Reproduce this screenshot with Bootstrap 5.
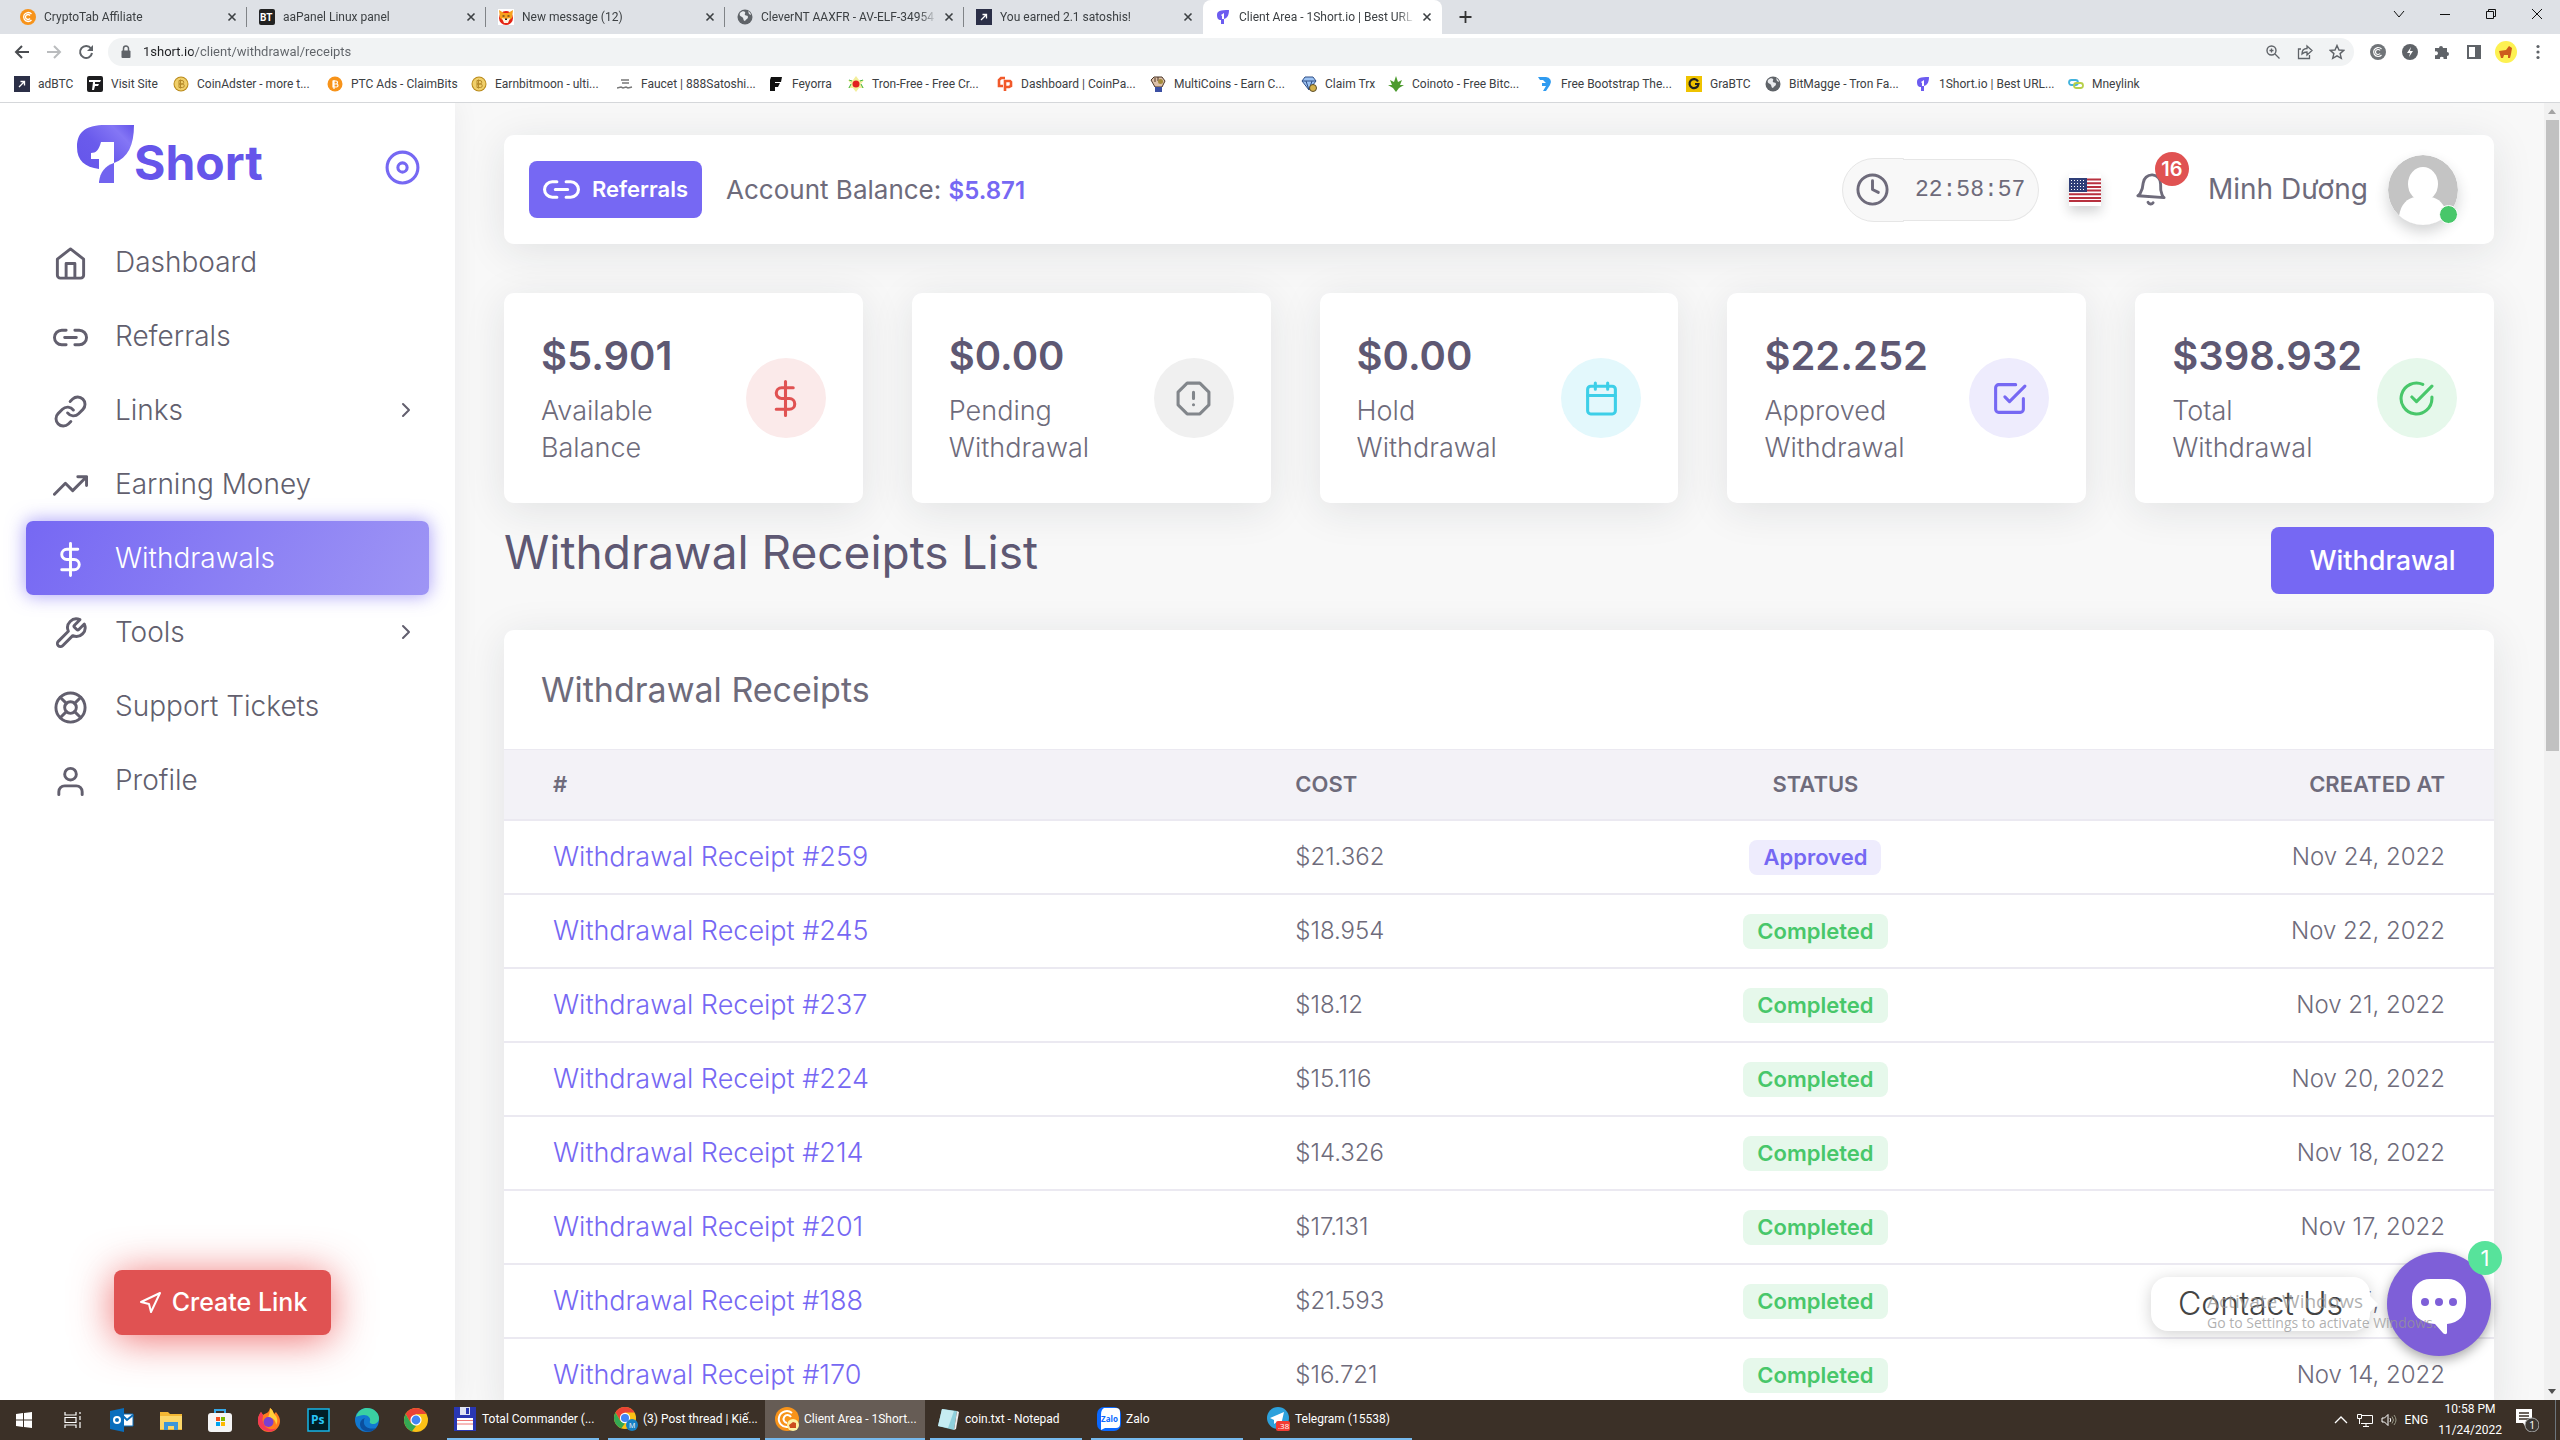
<!DOCTYPE html>
<html lang="en">
<head>
<meta charset="utf-8">
<meta name="viewport" content="width=device-width, initial-scale=1">
<title>Client Area - 1Short.io | Best URL Shortener</title>
<link href="https://cdn.jsdelivr.net/npm/bootstrap@5.3.0/dist/css/bootstrap.min.css" rel="stylesheet">
<style>
:root{--violet:#7668f3;--ink:#6e6b7b;--ink-dark:#5e5873;--red:#e05252;--line:#ebe9f1;--green:#48c76a}
html,body{height:100%}
body{font-family:Inter,"Noto Sans",sans-serif;color:var(--ink);font-size:24px;line-height:37px;overflow:hidden;background:#f8f8f8}
a{text-decoration:none;color:inherit}
button{color:inherit}
svg{display:block;flex:none}
.stroke{fill:none;stroke:currentColor;stroke-width:2;stroke-linecap:round;stroke-linejoin:round}
.i16{width:16px;height:16px}.i24{width:24px;height:24px}.i35{width:35px;height:35px}.i37{width:37px;height:37px}
/* browser window */
.browser{font-family:Roboto,"Noto Sans",sans-serif;font-size:12px;line-height:16px;color:#3c4043;background:#fff;border-bottom:1px solid #d5d7da}
.tabstrip{height:34px;background:#dee1e6;padding-left:8px}
.btab{width:239px;padding:0 7px 0 12px;position:relative}
.btab:not(.cur):not(.last)::after{content:"";position:absolute;right:0;top:7px;height:20px;width:1px;background:#808387}
.btab.cur{background:#fff;border-radius:8px 8px 0 0}
.btab .ttl{flex:1;overflow:hidden;white-space:nowrap;margin-right:-4px;-webkit-mask-image:linear-gradient(90deg,#000 90%,transparent);mask-image:linear-gradient(90deg,#000 90%,transparent)}
.plain{border:0;background:none;padding:0;display:flex;align-items:center;justify-content:center}
.winctl{gap:30px;padding-right:15px;height:28px;color:#111}
.toolbar{height:36px;padding:0 14px;gap:16px;color:#5f6368}
.omni{height:28px;border-radius:14px;background:#f1f3f4;padding:0 9px 0 10px;gap:16px;margin-left:-2px}
.omni input{border:0;background:linear-gradient(90deg,#202124 50px,#5f6368 50px);-webkit-background-clip:text;background-clip:text;-webkit-text-fill-color:transparent;outline:0;flex:1;padding:0;font-size:13px;margin-left:-7px}
.user-pic{margin:0 -4px}
.marks{height:32px;padding:0 14px 4px;display:grid;align-items:center;grid-template-columns:73px 86px 154px 144px 146px 151px 80px 149px 153px 151px 87px 149px 149px 79px 150px 153px 90px}
.marks a{display:flex;gap:8px;white-space:nowrap}
/* sidebar */
.sidebar{width:455px;background:#fff;box-shadow:0 0 26px rgba(34,41,47,.06);z-index:1;padding:0 26px}
.brand{height:122px;padding:22px 8px 0 51px}
.brand .word{font-size:48px;line-height:48px;font-weight:700;color:#6655ea;margin-top:14px}
.pin{margin-top:24px;color:var(--violet)}
.menu a{height:74px;padding:0 11px 0 27px;gap:27px;font-size:28px;font-weight:300;color:#625f6e;border-radius:7px}
.menu svg:first-child{margin-top:3px}
.menu .act{color:#fff;background:linear-gradient(118deg,var(--violet),#9e95f5);box-shadow:0 0 18px 1px rgba(118,104,243,.6)}
.create{height:65px;width:217px;font-size:25px;font-weight:500;color:#fff;background:var(--red);border:0;border-radius:8px;box-shadow:0 4px 40px rgba(234,60,60,.75);gap:10px;margin:auto 0 65px 88px}
/* content */
.content{padding:32px 50px 0 49px;min-width:0}
.panel{background:#fff;border-radius:10px;box-shadow:0 7px 42px rgba(34,41,47,.1)}
.topbar{height:109px;padding:0 36px 0 25px;margin-bottom:49px}
.vbtn{background:var(--violet);color:#fff;border:0;border-radius:8px}
.refbtn{height:57px;padding:0 14px;font-size:22px;font-weight:600;gap:12px}
.bal{font-size:26px}
.bal strong{font-weight:600;font-size:24px;color:var(--violet)}
.clock{width:197px;height:64px}
.clock>*{background:#f8f8f8!important;border:1px solid #e6e6e6!important;color:var(--ink)!important}
.clock .input-group-text{width:62px;padding:0 12px;border-radius:32px 0 0 32px}
.clock input{height:62px;font:23px "Liberation Mono",monospace;padding:0 12px;border-left:0!important;border-radius:0 32px 32px 0!important;margin:1px 0 1px -1px}
.flagbox{margin-left:30px;width:32px;height:32px;box-shadow:0 6px 12px rgba(34,41,47,.2)}
.bell{margin-left:34px}
.bell b{position:absolute;left:20px;top:-20px;width:34px;height:34px;line-height:34px;border-radius:50%;background:var(--red);color:#fff;font-size:20px;text-align:center;font-weight:600}
.uname{margin:0 20px 0 38px;font-weight:400;font-size:28px}
.ava{width:70px;height:70px;border-radius:50%;box-shadow:0 7px 14px rgba(34,41,47,.2)}
.dot{position:absolute;right:0;bottom:1px;width:19px;height:19px;border-radius:50%;background:var(--green);border:1px solid #fff}
.stats{display:grid;grid-template-columns:repeat(5,1fr);gap:49px}
.stat{height:210px;padding:37px;font-size:27px;font-weight:300}
.stat h2{font-size:40px;line-height:49px;font-weight:600;color:var(--ink-dark);margin:0 0 12px;white-space:nowrap}
.ring{width:80px;height:80px;border-radius:50%;margin-left:-20px}
.ring.rd{background:#fbeaea;color:#e05252}.ring.gy{background:#f0f0f0;color:#82868b}.ring.cy{background:#e3f8fc;color:#3dcfe8}.ring.vt{background:#eeecfd;color:#7668f3}.ring.gn{background:#e6f8eb;color:#48c76a}
.title{height:127px;padding-top:24px}
.title h1{font-size:46px;line-height:50px;font-weight:400;color:var(--ink-dark);margin:0}
.title button{height:67px;width:223px;font-weight:500;font-size:27px}
.panel h3{font-size:34px;line-height:37px;font-weight:400;margin:0;padding:41px 37px}
.rtable{table-layout:fixed;width:100%;border-collapse:collapse}
.rtable th{font-size:22px;line-height:32px;padding:18px 49px;background:#f3f2f7;border-top:1px solid var(--line);border-bottom:2px solid var(--line);font-weight:600;height:70px}
.rtable td{height:74px;padding:0 49px;border-bottom:2px solid var(--line);vertical-align:middle;white-space:nowrap;font-weight:300}
.rtable td a{color:var(--violet);font-size:27px}
.pill{display:inline-block;font-size:22px;line-height:35px;font-weight:600;padding:0 14px;border-radius:8px;color:var(--green);background:#e6f8eb}
.pill.vi{color:var(--violet);background:#eeecfd}
.sbar{width:16px;background:#f1f1f1}
.sbar i{width:13px;height:631px;background:#c1c1c1}
/* overlays */
.contact{position:absolute;right:190px;bottom:69px;width:219px;height:54px;line-height:54px;border-radius:17px;background:#fff;color:#444;font-size:32px;box-shadow:0 3px 16px rgba(0,0,0,.18);text-align:center;font-weight:300;z-index:3}
.contact::after{content:"";position:absolute;right:-8px;top:19px;border:8px solid transparent;border-left-color:#fff;border-right:0}
.chat{position:absolute;right:69px;bottom:44px;width:104px;height:104px;border-radius:50%;border:0;background:#7e5fd8;z-index:3;box-shadow:0 4px 12px rgba(0,0,0,.35);padding-top:6px}
.chat b{position:absolute;right:-11px;top:-11px;width:34px;height:34px;line-height:34px;border-radius:50%;background:#57e39b;color:#fff;font-weight:400;font-size:22px}
.mark-os{position:absolute;right:117px;bottom:67px;z-index:4;color:rgba(150,150,150,.75);font-family:"Open Sans",sans-serif;font-size:19px;line-height:24px;width:236px;white-space:nowrap}
.mark-os span{display:block;font-size:14px;line-height:20px}
/* desktop task bar */
.taskbar{height:40px;background:#3b3027;color:#fff;font-family:Roboto,"Noto Sans",sans-serif;font-size:12px;line-height:16px}
.quick{gap:25px;padding:0 19px 0 12px}
.task{width:152px;height:40px;border:0;border-bottom:2px solid #76b9ed;background:none;color:#fff;padding:0 4px 0 6px;gap:5px;margin-right:9px;white-space:nowrap;text-align:left}
.task.on{background:#665c55;width:160px;padding-left:10px;margin:0 5px 0 -4px}
.when{line-height:21px;margin:0 9px 0 2px}
.desk{width:5px}
</style>
</head>
<body class="d-flex flex-column">
<svg width="0" height="0" class="position-absolute">
<defs>
<symbol id="x" viewBox="0 0 16 16"><path d="M4.500 4.500l7 7M11.500 4.500l-7 7" stroke="#3c4043" stroke-width="1.600"/></symbol>
<symbol id="adbtc" viewBox="0 0 16 16"><path fill="#2b2f47" d="M0 0h16v16H0z"/><path d="M5 11l5-5M6.500 5.500H10.500V9.500" fill="none" stroke="#fff" stroke-width="1.300"/></symbol>
<symbol id="globe" viewBox="0 0 16 16"><circle cx="8" cy="8" r="7.500" fill="#5f6368"/><path d="M3 4c2-2 4-2 5-1s-1 2 0 3 3 0 3 2-2 2-3 4c-2 0-1-3-3-4S2 6 3 4zM11 2c2 1 3 3 3 4l-2-1z" fill="#e8eaed"/></symbol>
<symbol id="one" viewBox="0 0 16 16"><path d="M2 6C2 2 5 1 14 1c0 4-1 8-5 9v5H6v-4C3 11 2 9 2 6z" fill="#6c5cf0"/><path d="M6 6l3-2v6H7V7z" fill="#fff"/></symbol>
<symbol id="coin" viewBox="0 0 16 16"><circle cx="8" cy="8" r="7.500" fill="#b98a1c"/><circle cx="8" cy="8" r="6.500" fill="#f0cf6a"/><path d="M6 4.500h3a1.700 1.700 0 010 3.500H6h3.500a1.700 1.700 0 010 3.500H6zM7.500 3.500v9" fill="none" stroke="#b58a2a" stroke-width="1"/></symbol>
<symbol id="chrome" viewBox="0 0 24 24"><circle cx="12" cy="12" r="12" fill="#fbc116"/><path d="M12 0a12 12 0 0110.400 6H12L6.800 15 1.600 6A12 12 0 0112 0z" fill="#ea4335"/><path d="M1.600 6l5.200 9 5.200 3-4 5.300A12 12 0 011.600 6z" fill="#34a853"/><circle cx="12" cy="12" r="5.600" fill="#fff"/><circle cx="12" cy="12" r="4.400" fill="#4285f4"/></symbol>
<symbol id="link2" viewBox="0 0 24 24"><path class="stroke" d="M15 7h3a5 5 0 015 5 5 5 0 01-5 5h-3m-6 0H6a5 5 0 01-5-5 5 5 0 015-5h3M8 12h8"/></symbol>
<symbol id="dollar" viewBox="0 0 24 24"><path class="stroke" d="M12 1v22M17 5H9.500a3.500 3.500 0 000 7h5a3.500 3.500 0 010 7H6"/></symbol>
<symbol id="chev" viewBox="0 0 24 24"><path class="stroke" d="M9 18l6-6-6-6"/></symbol>
<linearGradient id="lg" x1="0" y1="1" x2="1" y2="0"><stop offset="0" stop-color="#6353ea"/><stop offset=".5" stop-color="#6a5bec"/><stop offset=".8" stop-color="#8476f5"/><stop offset="1" stop-color="#6353ea"/></linearGradient>
</defs>
</svg>

<header class="browser">
 <div class="tabstrip d-flex">
  <div class="btab d-flex align-items-center gap-2"><svg class="i16" viewBox="0 0 16 16"><circle cx="8" cy="8" r="8" fill="#f7931a"/><path d="M11.500 5A4.500 4.500 0 108 12.500a4.500 4.500 0 003.500-1.500M10 6.500a2.500 2.500 0 100 3" fill="none" stroke="#fff" stroke-width="1.300"/></svg><span class="ttl">CryptoTab Affiliate</span><button class="plain" aria-label="Close tab"><svg class="i16"><use href="#x"/></svg></button></div>
  <div class="btab d-flex align-items-center gap-2"><svg class="i16" viewBox="0 0 16 16"><rect width="16" height="16" rx="2" fill="#222"/><text x="1" y="12" font-size="10" font-weight="700" font-family="Roboto" fill="#fff">BT</text></svg><span class="ttl">aaPanel Linux panel</span><button class="plain" aria-label="Close tab"><svg class="i16"><use href="#x"/></svg></button></div>
  <div class="btab d-flex align-items-center gap-2"><svg class="i16" viewBox="0 0 16 16"><path d="M0 0h16v16H0z" fill="#fff"/><circle cx="8" cy="9" r="7" fill="#e42313"/><path d="M1 1l5 3h4l5-3-1 8-6 5-6-5z" fill="#f7a01d"/><path d="M4 9l4 1 4-1-2 5H6z" fill="#fff3df"/><path d="M4.500 7h2M9.500 7h2M7 10h2l-1 1z" stroke="#222" stroke-width="1"/></svg><span class="ttl">New message (12)</span><button class="plain" aria-label="Close tab"><svg class="i16"><use href="#x"/></svg></button></div>
  <div class="btab d-flex align-items-center gap-2"><svg class="i16"><use href="#globe"/></svg><span class="ttl">CleverNT AAXFR - AV-ELF-34954</span><button class="plain" aria-label="Close tab"><svg class="i16"><use href="#x"/></svg></button></div>
  <div class="btab last d-flex align-items-center gap-2"><svg class="i16"><use href="#adbtc"/></svg><span class="ttl">You earned 2.1 satoshis!</span><button class="plain" aria-label="Close tab"><svg class="i16"><use href="#x"/></svg></button></div>
  <div class="btab cur d-flex align-items-center gap-2"><svg class="i16"><use href="#one"/></svg><span class="ttl">Client Area - 1Short.io | Best URL</span><button class="plain" aria-label="Close tab"><svg class="i16"><use href="#x"/></svg></button></div>
  <button class="plain ms-3" aria-label="New tab"><svg class="i16" viewBox="0 0 16 16"><path d="M7.500 2v12M1.500 8h12" stroke="#333" stroke-width="1.800"/></svg></button>
  <div class="winctl d-flex align-items-center ms-auto">
   <button class="plain" aria-label="Search tabs"><svg class="i16" viewBox="0 0 16 16"><path d="M3 5l5 6 5-6" fill="none" stroke="currentColor"/></svg></button>
   <button class="plain" aria-label="Minimize"><svg class="i16" viewBox="0 0 16 16"><path d="M3 8.500h10" stroke="currentColor"/></svg></button>
   <button class="plain" aria-label="Restore"><svg class="i16" viewBox="0 0 16 16"><path d="M3.500 5.500h7v7h-7zM5.500 5.500v-2h7v7h-2" fill="none" stroke="currentColor"/></svg></button>
   <button class="plain" aria-label="Close"><svg class="i16" viewBox="0 0 16 16"><path d="M3 3l10 10M13 3L3 13" stroke="currentColor"/></svg></button>
  </div>
 </div>
 <div class="toolbar d-flex align-items-center">
  <button class="plain" aria-label="Back"><svg class="i16" viewBox="0 0 16 16"><path d="M15 8H2M8 2L2 8l6 6" fill="none" stroke="#4a4d51" stroke-width="2"/></svg></button>
  <button class="plain" aria-label="Forward"><svg class="i16" viewBox="0 0 16 16"><path d="M1 8h13M8 2l6 6-6 6" fill="none" stroke="#babcbe" stroke-width="2"/></svg></button>
  <button class="plain" aria-label="Reload"><svg class="i16" viewBox="0 0 16 16"><path d="M13 4.500A6 6 0 1014 9" fill="none" stroke="#5f6368" stroke-width="2"/><path d="M15 1v6H9z" fill="#5f6368"/></svg></button>
  <div class="omni d-flex align-items-center flex-fill">
   <svg class="i16" viewBox="0 0 16 16"><rect x="3.500" y="6.500" width="9" height="7.500" rx="1" fill="#5f6368"/><path d="M5.500 7V4.500a2.500 2.500 0 015 0V7" fill="none" stroke="#5f6368" stroke-width="1.500"/></svg>
   <input type="text" value="1short.io/client/withdrawal/receipts" aria-label="Address">
   <svg class="i16" viewBox="0 0 16 16"><circle cx="6.500" cy="6.500" r="4.500" fill="none" stroke="currentColor" stroke-width="1.400"/><path d="M10 10l4.500 4.500M4.500 6.500h4M6.500 4.500v4" stroke="currentColor" stroke-width="1.300"/></svg>
   <svg class="i16" viewBox="0 0 16 16"><path d="M4 5H1.500v9.500h11V11M5 10c0-4 2-5.500 5-5.500V2l5 4.500L10 11V8C8 8 6.500 8.500 5 10z" fill="none" stroke="currentColor" stroke-width="1.300"/></svg>
   <svg class="i16" viewBox="0 0 16 16"><path d="M8 1.500l2 4.500 4.800.4-3.700 3.200 1.200 4.700L8 11.800l-4.300 2.500 1.200-4.700L1.200 6.400 6 6z" fill="none" stroke="currentColor" stroke-width="1.400"/></svg>
  </div>
  <svg class="i16" viewBox="0 0 16 16"><circle cx="8" cy="8" r="8" fill="#707478"/><path d="M11.500 5A4.500 4.500 0 108 12.500a4.500 4.500 0 003.500-1.500M10 6.500a2.500 2.500 0 100 3" fill="none" stroke="#fff" stroke-width="1.200"/></svg>
  <svg class="i16" viewBox="0 0 16 16"><circle cx="8" cy="8" r="8" fill="#5f6368"/><path d="M9 3L5 9h3l-1 4 4-6H8z" fill="#fff"/></svg>
  <svg class="i16" viewBox="0 0 16 16"><path d="M1 4h4a2 2 0 114 0h4v4a2 2 0 110 4v3H9.500a1.800 1.800 0 10-3.500 0H1v-4a2 2 0 100-3.500z" fill="#5f6368"/></svg>
  <svg class="i16" viewBox="0 0 16 16"><path d="M2 2h12v12H2z" fill="none" stroke="#5f6368" stroke-width="2"/><path d="M9 1h6v14H9z" fill="#5f6368"/></svg>
  <svg class="i24 user-pic" viewBox="0 0 24 24"><circle cx="12" cy="12" r="11" fill="#fdf151"/><path d="M5 11l7-1 3-4 3 2-1 6-1 4h-2v-3h-4l-1 3H7z" fill="#cc5c1d"/></svg>
  <svg class="i16" viewBox="0 0 16 16"><circle cx="8" cy="2.500" r="1.600" fill="#5f6368"/><circle cx="8" cy="8" r="1.600" fill="#5f6368"/><circle cx="8" cy="13.500" r="1.600" fill="#5f6368"/></svg>
 </div>
 <nav class="marks" aria-label="Bookmarks">
  <a href="#"><svg class="i16"><use href="#adbtc"/></svg>adBTC</a>
  <a href="#"><svg class="i16" viewBox="0 0 16 16"><rect width="16" height="16" rx="2" fill="#1d1d1f"/><path d="M2 4h12l-1 2H8v2h4l-1 2H8l-1 4H5l1-8H2z" fill="#fff"/></svg>Visit Site</a>
  <a href="#"><svg class="i16"><use href="#coin"/></svg>CoinAdster - more t...</a>
  <a href="#"><svg class="i16" viewBox="0 0 16 16"><circle cx="8" cy="8" r="7.500" fill="#f7931a"/><path d="M6 5h3a1.500 1.500 0 010 3H6h3.500a1.500 1.500 0 010 3H6zM7 4v9" fill="none" stroke="#fff" stroke-width="1.200"/></svg>PTC Ads - ClaimBits</a>
  <a href="#"><svg class="i16"><use href="#coin"/></svg>Earnbitmoon - ulti...</a>
  <a href="#"><svg class="i16" viewBox="0 0 16 16"><path d="M4 4h8M5 7h7M0 12l4-1 2 1 3-1 2 1 4-1" fill="none" stroke="#777" stroke-width="1.500"/></svg>Faucet | 888Satoshi...</a>
  <a href="#"><svg class="i16" viewBox="0 0 16 16"><path d="M3 1h11l-1 5H7v1h5l-2 4H7v4H2V4z" fill="#111"/></svg>Feyorra</a>
  <a href="#"><svg class="i16" viewBox="0 0 16 16"><path d="M8 0l3 4 5 0-3 4 3 4h-5l-3 4-3-4H0l3-4-3-4h5z" fill="#f3ee9b"/><circle cx="8" cy="8" r="3.500" fill="#e21f1f"/><path d="M1 12l2-4M15 12l-2-4M1 4l3 1M15 4l-3 1" stroke="#3bb54a"/></svg>Tron-Free - Free Cr...</a>
  <a href="#"><svg class="i16" viewBox="0 0 16 16"><path d="M8 2H4L2 4v6h4M8 15V5h5l1 1v4l-2 1H8" fill="none" stroke="#f1592a" stroke-width="2.600"/></svg>Dashboard | CoinPa...</a>
  <a href="#"><svg class="i16" viewBox="0 0 16 16"><path d="M1 4l3-3 8 0 3 4-3 6H5z" fill="#dcc0a8" stroke="#4a3527"/><path d="M5 2v4M8 1v4" stroke="#4a3527"/><circle cx="10.500" cy="5.500" r="2.500" fill="#a48b3c"/><path d="M5 11h7v5H5z" fill="#3b4fa3"/></svg>MultiCoins - Earn C...</a>
  <a href="#"><svg class="i16" viewBox="0 0 16 16"><path d="M4 1h8l3 4-7 9-7-9z" fill="#9cc2f2" stroke="#2f4f86"/><path d="M1 5h14M5 5l3 9 3-9" stroke="#2f4f86" fill="none"/><circle cx="12" cy="12" r="3.500" fill="#d4b24c" stroke="#5b4d2a"/></svg>Claim Trx</a>
  <a href="#"><svg class="i16" viewBox="0 0 16 16"><path d="M8 0l2 6 4-2-2 5 4 0-5 3-3 4-3-4-5-3h4L2 4l4 2z" fill="#4d9b2f"/></svg>Coinoto - Free Bitc...</a>
  <a href="#"><svg class="i16" viewBox="0 0 16 16"><path d="M1 1h8a5 5 0 014 8l-4 6H6l3-5-4 0 0-3h4L6 4H3z" fill="#2f9bf0"/></svg>Free Bootstrap The...</a>
  <a href="#"><svg class="i16" viewBox="0 0 16 16"><path d="M0 0h16v16H0z" fill="#efc300"/><path d="M12 5.500A4.500 4.500 0 1012.500 8H9" fill="none" stroke="#222" stroke-width="2.200"/></svg>GraBTC</a>
  <a href="#"><svg class="i16"><use href="#globe"/></svg>BitMagge - Tron Fa...</a>
  <a href="#"><svg class="i16"><use href="#one"/></svg>1Short.io | Best URL...</a>
  <a href="#"><svg class="i16" viewBox="0 0 16 16"><rect x="1" y="4" width="9" height="5" rx="2.500" fill="none" stroke="#43b3dd" stroke-width="1.800"/><rect x="6" y="7" width="9" height="5" rx="2.500" fill="none" stroke="#b7d04a" stroke-width="1.800"/></svg>Mneylink</a>
 </nav>
</header>

<div class="d-flex flex-fill position-relative overflow-hidden">
 <aside class="sidebar d-flex flex-column flex-shrink-0">
  <div class="brand d-flex align-items-start">
   <svg width="57" height="58" viewBox="0 0 57 58"><path d="M0 22C0 6 10 0 28 0h29c0 20-6 33-20 38v20H22V44C8 42 0 36 0 22z" fill="url(#lg)"/><path d="M14 28c5 0 8-3 10-11h13v21l-8 8-7 11V34h-8z" fill="#fff"/><path d="M22 57c1-10 6-16 15-19v20H22z" fill="#7163ef"/></svg>
   <span class="word">Short</span>
   <svg class="i37 stroke ms-auto pin" viewBox="0 0 24 24"><circle cx="12" cy="12" r="10"/><circle cx="12" cy="12" r="3"/></svg>
  </div>
  <nav class="menu d-flex flex-column">
   <a class="d-flex align-items-center" href="#"><svg class="i35 stroke" viewBox="0 0 24 24"><path d="M3 9l9-7 9 7v11a2 2 0 01-2 2H5a2 2 0 01-2-2zM9 22V12h6v10"/></svg>Dashboard</a>
   <a class="d-flex align-items-center" href="#"><svg class="i35"><use href="#link2"/></svg>Referrals</a>
   <a class="d-flex align-items-center" href="#"><svg class="i35 stroke" viewBox="0 0 24 24"><path d="M10 13a5 5 0 007.540.540l3-3a5 5 0 00-7.070-7.070l-1.720 1.710M14 11a5 5 0 00-7.540-.540l-3 3a5 5 0 007.070 7.070l1.710-1.710"/></svg>Links<svg class="i24 ms-auto"><use href="#chev"/></svg></a>
   <a class="d-flex align-items-center" href="#"><svg class="i35 stroke" viewBox="0 0 24 24"><path d="M23 6l-9.500 9.500-5-5L1 18M17 6h6v6"/></svg>Earning Money</a>
   <a class="d-flex align-items-center act" href="#"><svg class="i35"><use href="#dollar"/></svg>Withdrawals</a>
   <a class="d-flex align-items-center" href="#"><svg class="i35 stroke" viewBox="0 0 24 24"><path d="M14.700 6.300a1 1 0 000 1.400l1.600 1.600a1 1 0 001.400 0l3.770-3.770a6 6 0 01-7.940 7.940l-6.910 6.910a2.120 2.120 0 01-3-3l6.910-6.910a6 6 0 017.940-7.940l-3.760 3.760z"/></svg>Tools<svg class="i24 ms-auto"><use href="#chev"/></svg></a>
   <a class="d-flex align-items-center" href="#"><svg class="i35 stroke" viewBox="0 0 24 24"><circle cx="12" cy="12" r="10"/><circle cx="12" cy="12" r="4"/><path d="M4.930 4.930l4.240 4.240M14.830 14.830l4.240 4.240M14.830 9.170l4.240-4.240M4.930 19.070l4.240-4.240"/></svg>Support Tickets</a>
   <a class="d-flex align-items-center" href="#"><svg class="i35 stroke" viewBox="0 0 24 24"><path d="M20 21v-2a4 4 0 00-4-4H8a4 4 0 00-4 4v2"/><circle cx="12" cy="7" r="4"/></svg>Profile</a>
  </nav>
  <button class="create d-flex align-items-center justify-content-center"><svg class="i24 stroke" viewBox="0 0 24 24"><path d="M3 11l19-9-9 19-2-8z"/></svg>Create Link</button>
 </aside>

 <main class="content flex-fill">
  <div class="panel topbar d-flex align-items-center">
   <button class="vbtn refbtn d-flex align-items-center"><svg class="i37"><use href="#link2"/></svg>Referrals</button>
   <span class="bal ms-4">Account Balance: <strong>$5.871</strong></span>
   <div class="input-group clock ms-auto flex-nowrap"><label class="input-group-text" for="now" aria-label="Server time"><svg class="i35 stroke" viewBox="0 0 24 24"><circle cx="12" cy="12" r="10"/><path d="M12 6v6l4 2"/></svg></label><input id="now" class="form-control" type="text" value="22:58:57" readonly></div>
   <svg class="flagbox" viewBox="0 0 32 32"><path d="M0 0h32v32H0z" fill="#fff"/><path d="M0 5.500h32M0 9.200h32M0 12.900h32M0 16.600h32M0 20.300h32M0 24h32M0 27h32" stroke="#b8313f" stroke-width="2"/><path d="M0 4h18v14H0z" fill="#2f3f78"/><path d="M2 6.500h15M2 9.500h15M2 12.500h15M2 15.500h15" stroke="#fff" stroke-dasharray="1 2"/></svg>
   <div class="bell position-relative"><svg class="i35 stroke" viewBox="0 0 24 24"><path transform="rotate(4 12 2)" d="M18 8A6 6 0 006 8c0 7-3 9-3 9h18s-3-2-3-9M13.730 21a2 2 0 01-3.460 0"/></svg><b>16</b></div>
   <span class="uname">Minh Dương</span>
   <div class="position-relative"><svg class="ava" viewBox="0 0 70 70"><circle cx="35" cy="35" r="35" fill="#c4c4c4"/><ellipse cx="35" cy="29" rx="15" ry="17" fill="#fff"/><path d="M11 61c2-12 8-18 17-19h14c9 1 15 7 17 19a35 35 0 01-48 0z" fill="#fff"/></svg><span class="dot"></span></div>
  </div>

  <section class="stats">
   <div class="panel stat d-flex align-items-center justify-content-between"><div><h2>$5.901</h2>Available<br>Balance</div><div class="ring rd d-flex flex-shrink-0 align-items-center justify-content-center"><svg class="i37"><use href="#dollar"/></svg></div></div>
   <div class="panel stat d-flex align-items-center justify-content-between"><div><h2>$0.00</h2>Pending<br>Withdrawal</div><div class="ring gy d-flex flex-shrink-0 align-items-center justify-content-center"><svg class="i37 stroke" viewBox="0 0 24 24"><path d="M7.860 2h8.280L22 7.860v8.280L16.140 22H7.860L2 16.140V7.860zM12 8v4M12 16h.01"/></svg></div></div>
   <div class="panel stat d-flex align-items-center justify-content-between"><div><h2>$0.00</h2>Hold<br>Withdrawal</div><div class="ring cy d-flex flex-shrink-0 align-items-center justify-content-center"><svg class="i37 stroke" viewBox="0 0 24 24"><rect x="3" y="4" width="18" height="18" rx="2"/><path d="M16 2v4M8 2v4M3 10h18"/></svg></div></div>
   <div class="panel stat d-flex align-items-center justify-content-between"><div><h2>$22.252</h2>Approved<br>Withdrawal</div><div class="ring vt d-flex flex-shrink-0 align-items-center justify-content-center"><svg class="i37 stroke" viewBox="0 0 24 24"><path d="M9 11l3 3L22 4M21 12v7a2 2 0 01-2 2H5a2 2 0 01-2-2V5a2 2 0 012-2h11"/></svg></div></div>
   <div class="panel stat d-flex align-items-center justify-content-between"><div><h2>$398.932</h2>Total<br>Withdrawal</div><div class="ring gn d-flex flex-shrink-0 align-items-center justify-content-center"><svg class="i37 stroke" viewBox="0 0 24 24"><path d="M22 11.080V12a10 10 0 11-5.930-9.140M22 4L12 14.010l-3-3"/></svg></div></div>
  </section>

  <div class="title d-flex justify-content-between align-items-start"><h1>Withdrawal Receipts List</h1><button class="vbtn">Withdrawal</button></div>

  <section class="panel overflow-hidden">
   <h3>Withdrawal Receipts</h3>
   <table class="rtable">
    <colgroup><col style="width:37.3%"><col style="width:19.5%"><col style="width:18.2%"><col></colgroup>
    <thead><tr><th>#</th><th>COST</th><th class="text-center">STATUS</th><th class="text-end">CREATED AT</th></tr></thead>
    <tbody>
     <tr><td><a href="#">Withdrawal Receipt #259</a></td><td>$21.362</td><td class="text-center"><span class="pill vi">Approved</span></td><td class="text-end">Nov 24, 2022</td></tr>
     <tr><td><a href="#">Withdrawal Receipt #245</a></td><td>$18.954</td><td class="text-center"><span class="pill">Completed</span></td><td class="text-end">Nov 22, 2022</td></tr>
     <tr><td><a href="#">Withdrawal Receipt #237</a></td><td>$18.12</td><td class="text-center"><span class="pill">Completed</span></td><td class="text-end">Nov 21, 2022</td></tr>
     <tr><td><a href="#">Withdrawal Receipt #224</a></td><td>$15.116</td><td class="text-center"><span class="pill">Completed</span></td><td class="text-end">Nov 20, 2022</td></tr>
     <tr><td><a href="#">Withdrawal Receipt #214</a></td><td>$14.326</td><td class="text-center"><span class="pill">Completed</span></td><td class="text-end">Nov 18, 2022</td></tr>
     <tr><td><a href="#">Withdrawal Receipt #201</a></td><td>$17.131</td><td class="text-center"><span class="pill">Completed</span></td><td class="text-end">Nov 17, 2022</td></tr>
     <tr><td><a href="#">Withdrawal Receipt #188</a></td><td>$21.593</td><td class="text-center"><span class="pill">Completed</span></td><td class="text-end">Nov 15, 2022</td></tr>
     <tr><td><a href="#">Withdrawal Receipt #170</a></td><td>$16.721</td><td class="text-center"><span class="pill">Completed</span></td><td class="text-end">Nov 14, 2022</td></tr>
    </tbody>
   </table>
  </section>
 </main>

 <div class="sbar d-flex flex-column align-items-center flex-shrink-0"><svg width="16" height="17" viewBox="0 0 16 17"><path d="M4 11l4-5 4 5z" fill="#a3a3a3"/></svg><i></i><svg class="mt-auto" width="16" height="17" viewBox="0 0 16 17"><path d="M4 6l4 5 4-5z" fill="#505050"/></svg></div>

 <div class="contact">Contact Us</div>
 <button class="chat" aria-label="Open chat"><svg class="mx-auto" width="56" height="56" viewBox="0 0 56 56"><path d="M19 0h18a18 18 0 0118 18v6c0 12-7 20-19 21v9c-1 2-3 1-4 0l-8-9C9 44 1 36 1 24v-6A18 18 0 0119 0z" fill="#fff"/><g fill="#7e5fd8"><circle cx="14" cy="23" r="4"/><circle cx="28" cy="23" r="4"/><circle cx="42" cy="23" r="4"/></g></svg><b>1</b></button>
 <div class="mark-os">Activate Windows<span>Go to Settings to activate Windows.</span></div>
</div>

<footer class="taskbar d-flex align-items-center flex-shrink-0">
 <div class="quick d-flex align-items-center">
  <svg class="i24" viewBox="0 0 24 24"><path d="M4 6l7-1v6.500H4zM12 5l8-1v7.500h-8zM4 12.500h7V19l-7-1zM12 12.500h8V20l-8-1z" fill="#fff"/></svg>
  <svg class="i24" viewBox="0 0 24 24"><path d="M4 4v3h11V4M4 20v-3h11v3M4 9.500h11v5H4zM19 4v2M19 8v4M19 14v6" fill="none" stroke="#fff" stroke-width="1.200"/></svg>
  <svg class="i24" viewBox="0 0 24 24"><path d="M12 6h11v12H12z" fill="#fff" stroke="#0a6ebd"/><path d="M12 7l5 5 6-5" fill="none" stroke="#0a6ebd" stroke-width="2"/><path d="M0 3l14-3v24L0 21z" fill="#0a6ebd"/><circle cx="7" cy="12" r="3" fill="none" stroke="#fff" stroke-width="2"/></svg>
  <svg class="i24" viewBox="0 0 24 24"><path d="M1 4h8l2 2h12v16H1z" fill="#f2b734"/><path d="M1 8h22v13H1z" fill="#fbd76a"/><path d="M5 14h14v8h-4v-4H9v4H5z" fill="#3c96d9"/></svg>
  <svg class="i24" viewBox="0 0 24 24"><path d="M7 6V2h10v4" fill="none" stroke="#35a7e6" stroke-width="2"/><rect x="0" y="5" width="24" height="19" rx="3" fill="#f5f5f5"/><path d="M8 9h4v4H8z" fill="#f25022"/><path d="M13 9h4v4h-4z" fill="#7fba00"/><path d="M8 14h4v4H8z" fill="#00a4ef"/><path d="M13 14h4v4h-4z" fill="#ffb900"/></svg>
  <svg class="i24" viewBox="0 0 24 24"><path d="M12 24A11 11 0 011 12C1 8 3 6 4 4l2 3c3-2 6-2 7-7 3 2 3 4 4 6l2-2c3 4 4 6 4 9a11 11 0 01-11 11z" fill="#ff7a1f"/><path d="M13 0c3 2 3 4 4 6 4 3 4 8 2 11 0-5-4-8-8-7 1-3 2-6 2-10z" fill="#ffcf3a"/><circle cx="11.500" cy="14" r="5" fill="#7a3fd0"/><path d="M1 12a11 11 0 0019 8c-5 3-12 1-14-6-1-2 0-4 0-7L4 4c-2 2-3 5-3 8z" fill="#f33a55"/></svg>
  <svg class="i24" viewBox="0 0 24 24"><rect x="2" y="1" width="21" height="22" fill="#001d26" stroke="#16b5e8" stroke-width="1.500"/><text x="5" y="16" font-size="12" font-weight="700" font-family="Open Sans" fill="#28c4f5">Ps</text></svg>
  <svg class="i24" viewBox="0 0 24 24"><circle cx="12" cy="12" r="12" fill="#1278d0"/><path d="M1 9C3 2 8 0 12 0c7 0 12 5 12 10 0 4-3 6-6 6-2 0-4-1-3-3 1-3-2-6-6-6-3 0-6 1-8 2z" fill="#3ad0a2"/><path d="M9 13c-1 5 4 9 12 7-5 6-15 4-16-3 0-4 2-6 5-7-1 1-1 2-1 3z" fill="#0b4f9e"/></svg>
  <svg class="i24"><use href="#chrome"/></svg>
 </div>
 <button class="task d-flex align-items-center"><svg class="i24" viewBox="0 0 24 24"><path d="M1 0h22v24H1z" fill="#2937b3"/><path d="M7 0h10v8H7z" fill="#dfe3f3"/><path d="M13 1h3v6h-3z" fill="#2937b3"/><path d="M4 11h16v12H4z" fill="#fff"/><path d="M4 13.500h16M4 17h16" stroke="#e77" /></svg><span>Total Commander (...</span></button>
 <button class="task d-flex align-items-center"><svg class="i24" viewBox="0 0 24 24"><use href="#chrome" width="22" height="22"/><circle cx="18" cy="18" r="6" fill="#1680c4"/><text x="15" y="21" font-size="7" font-family="Open Sans" fill="#fff">M</text></svg><span>(3) Post thread | Kiế...</span></button>
 <button class="task on d-flex align-items-center"><svg class="i24" viewBox="0 0 24 24"><circle cx="12" cy="12" r="12" fill="#f7931a"/><path d="M17 6a8 8 0 10-4 14M16 10a4 4 0 10-4 6" fill="none" stroke="#fff" stroke-width="2"/><circle cx="18" cy="18" r="6" fill="#fdf1a0"/><path d="M14 18l4-3 3 1v5h-6z" fill="#cc4c1d"/></svg><span>Client Area - 1Short...</span></button>
 <button class="task d-flex align-items-center"><svg class="i24" viewBox="0 0 24 24"><path d="M6 2l15 2-3 19-16-4z" fill="#8fd0dc"/><path d="M6 2l12 2-6 17-10-2z" fill="#c6ecf2"/><path d="M21 4l-3 19 2-1 3-17z" fill="#eee"/></svg><span>coin.txt - Notepad</span></button>
 <button class="task d-flex align-items-center"><svg class="i24" viewBox="0 0 24 24"><rect width="24" height="24" rx="7" fill="#0a68ff"/><path d="M7 1h12a4 4 0 014 4v12a4 4 0 01-4 4H8l-4 2V8c0-4 1-6 3-7z" fill="#fff"/><text x="4" y="15" font-size="8" font-weight="700" font-family="Open Sans" fill="#0a68ff">Zalo</text></svg><span>Zalo</span></button>
 <button class="task d-flex align-items-center ms-2"><svg class="i24" viewBox="0 0 24 24"><circle cx="12" cy="11" r="11" fill="#2da1dc"/><path d="M4 11l14-6-3 13-4-3-3 2v-4z" fill="#fff"/><rect x="10" y="14" width="14" height="10" rx="2" fill="#f23c34"/><text x="12" y="22" font-size="8" font-family="Open Sans" fill="#fff">.38</text></svg><span>Telegram (15538)</span></button>
 <div class="d-flex align-items-center ms-auto h-100">
  <svg class="i16" viewBox="0 0 16 16"><path d="M2 11l6-6 6 6" fill="none" stroke="#fff" stroke-width="1.300"/></svg>
  <svg class="i16 ms-2" viewBox="0 0 16 16"><path d="M4 3.500h11.500v8H4M9 12v2.500M6 14.500h6M.5 2.500h4v4h-4zM2.500 6.500V12" fill="none" stroke="#fff"/></svg>
  <svg class="i16 ms-2" viewBox="0 0 16 16"><path d="M1 6h2.500L7 2.500v11L3.500 10H1zM9 6q1.500 2 0 4" fill="none" stroke="#fff"/><path d="M11 4.500q3 3.500 0 7M13 3q4 5 0 10" fill="none" stroke="#998"/></svg>
  <span class="ms-2 me-2">ENG</span>
  <span class="text-center when">10:58 PM<br>11/24/2022</span>
  <svg class="i24 ms-1 me-3" viewBox="0 0 24 24"><path d="M1 1h16v14h-5l-2 3-2-3H1z" fill="#fff"/><path d="M4 5h10M4 8h10M4 11h10" stroke="#3b3027" stroke-width="1.300"/><circle cx="17" cy="17" r="7" fill="#3b3733" stroke="#aaa"/><text x="14" y="21" font-size="11" font-family="Open Sans" fill="#fff">1</text></svg>
  <span class="border-start border-secondary h-100 desk"></span>
 </div>
</footer>
<script src="https://cdn.jsdelivr.net/npm/bootstrap@5.3.0/dist/js/bootstrap.bundle.min.js"></script>
</body>
</html>
